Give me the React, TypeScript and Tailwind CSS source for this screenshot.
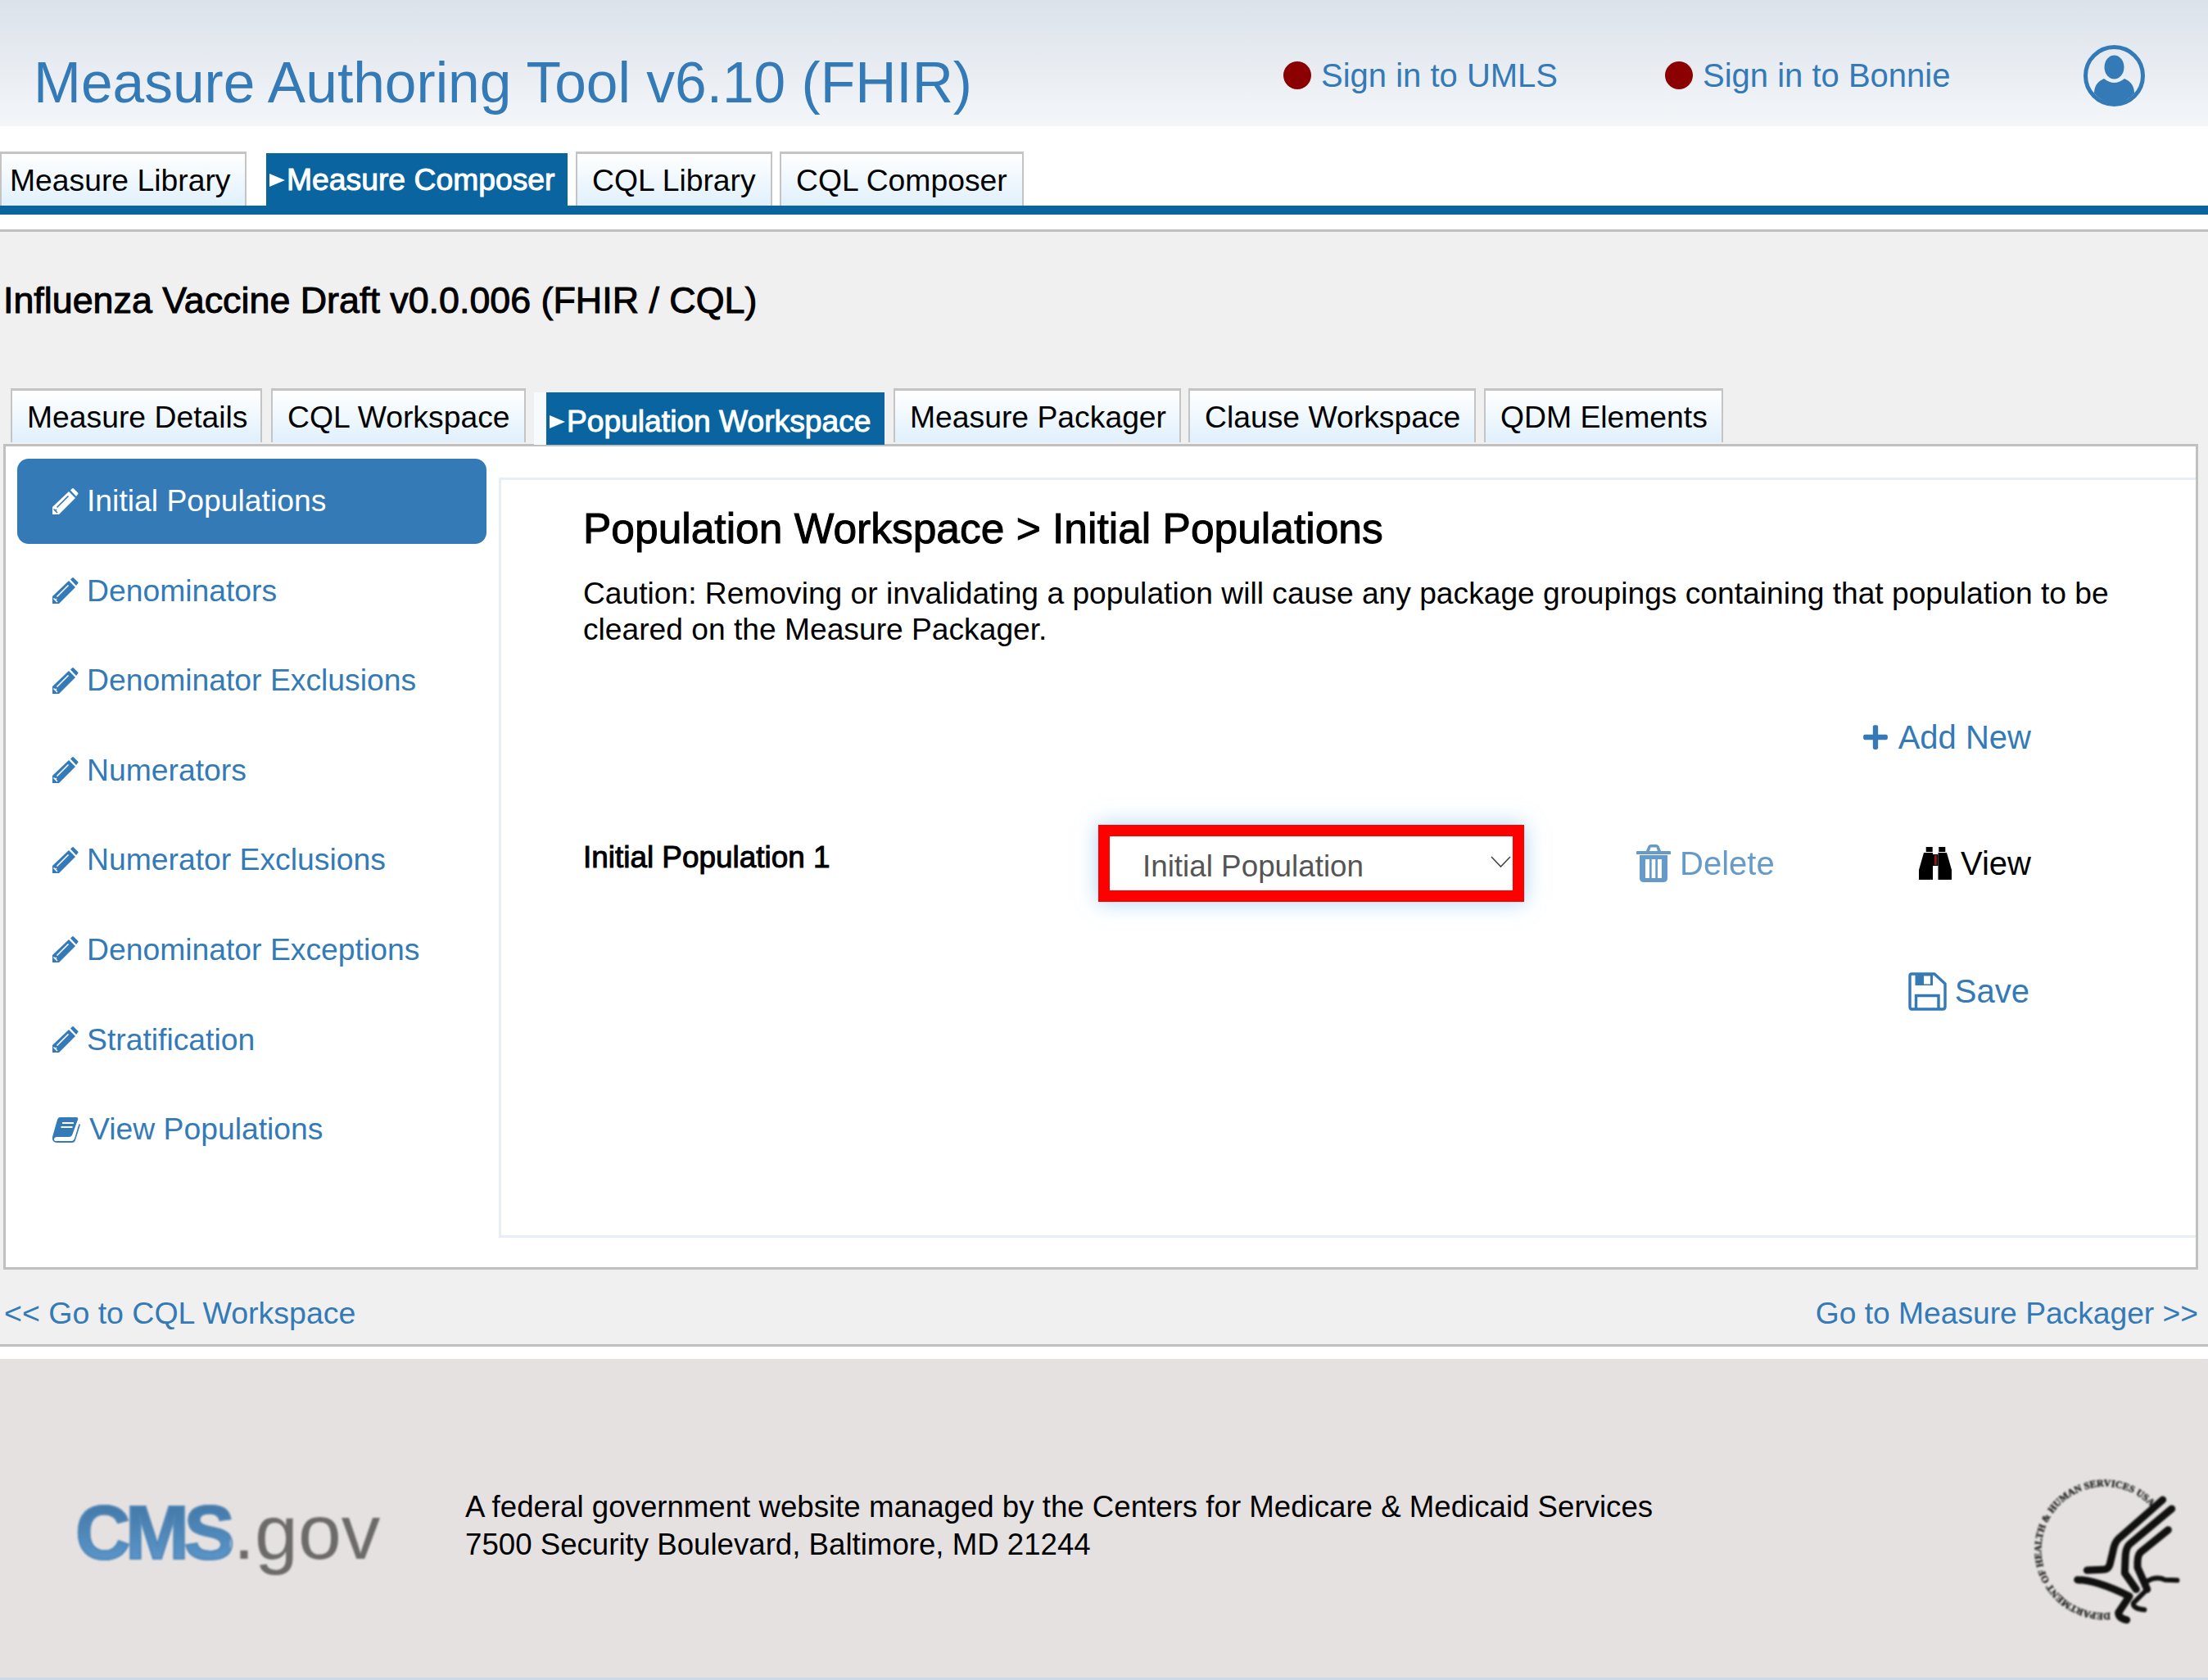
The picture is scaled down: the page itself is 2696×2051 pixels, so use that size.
import React from 'react';
import { FaPlus } from 'react-icons/fa';

function Pencil({ className }: { className: string }) {
  return (
    <svg viewBox="0 0 33 33" className={className}>
      <path fill="currentColor" d="M1 23 L21 4 L29 12 L9 32 L1 32 Z" />
      <path fill="currentColor" d="M23 2.5 L25 .5 Q26 -.5 27 .5 L32 5.5 Q33 6.5 32 7.5 L30 10 Z" />
      <path stroke="var(--hl)" strokeWidth="1.6" fill="none" d="M6.5 23.5 L20.5 9.5 M2.5 25.5 L7 30 M4 28 L6 26" />
    </svg>
  );
}

function Arrow() {
  return (
    <svg viewBox="0 0 19 16" className="w-[19px] h-[16px] shrink-0 mr-[2px]">
      <path fill="#fff" d="M0 0 L19 8 L0 16 Z" />
    </svg>
  );
}

function UserIcon() {
  return (
    <svg viewBox="0 0 75 75" className="w-[75px] h-[75px]">
      <circle cx="37.5" cy="37.5" r="35" fill="none" stroke="#337ab7" strokeWidth="5" />
      <ellipse cx="37.5" cy="27" rx="12" ry="14.5" fill="#337ab7" />
      <path fill="#337ab7" d="M13 59 Q13 46 25 41 Q37.5 51 50 41 Q62 46 62 59 Q51 71 37.5 71 Q24 71 13 59 Z" />
    </svg>
  );
}

function TrashIcon() {
  return (
    <svg viewBox="0 0 42 46" className="w-[42px] h-[46px] mr-[11px]">
      <path fill="currentColor" d="M12 8 L14 3 Q15 0 18 0 H24 Q27 0 28 3 L30 8 H41 Q42 8 42 9 V12 H0 V9 Q0 8 1 8 Z M16 8 H26 L24.5 3.5 H17.5 Z" />
      <path fill="currentColor" d="M4 13 H38 V41 Q38 46 33 46 H9 Q4 46 4 41 Z" />
      <path fill="#fff" d="M11 18 H16 V41 H11 Z M18.7 18 H23.3 V41 H18.7 Z M26 18 H31 V41 H26 Z" />
    </svg>
  );
}

function BinocularsIcon() {
  return (
    <svg viewBox="0 0 40 40" className="w-[40px] h-[40px] mr-[11px]">
      <path fill="#000" d="M8.7 0 H16.7 V6 H8.7 Z M24.3 0 H32.3 V6 H24.3 Z" />
      <path fill="#000" d="M6 7 H17 V40 H14.3 V38 L14 40 H0 V28 Z" />
      <path fill="#000" d="M23.5 7 H34 L40 28 V40 H26 V40 H23.5 Z" />
      <path fill="#000" d="M17 9 H23.5 V23 H17 Z" />
      <path fill="#8a1c1c" d="M18.8 10 H21.8 V22 H18.8 Z" />
    </svg>
  );
}

function SaveIcon() {
  return (
    <svg viewBox="0 0 47 47" className="w-[47px] h-[47px] mr-[10px]">
      <path fill="none" stroke="currentColor" strokeWidth="3.4" strokeLinejoin="round" d="M4 2 H32 L45 14 V42 Q45 45 42 45 H4 Q2 45 2 42 V4 Q2 2 4 2 Z" />
      <path fill="currentColor" fillRule="evenodd" d="M8.5 3 H30 V16 H8.5 Z M19 4.5 H27 V14.5 H19 Z" />
      <path fill="none" stroke="currentColor" strokeWidth="3.4" d="M9.5 45 V28.5 H37 V45" />
    </svg>
  );
}

function BookIcon() {
  return (
    <svg viewBox="0 0 35 33" className="w-[35px] h-[33px] mr-[11px]">
      <path fill="currentColor" d="M10 1 H30 Q33 1 32 4 L25 23 Q24 25 21 25 H7 Q3 25 3 28 Q3 30 6 30 H25 Q27 30 28 27 L33.5 9 L35 10 L29 29 Q28 32 25 32 H7 Q0 32 1 25 L7 4 Q8 1 10 1 Z" />
      <path fill="none" stroke="#fff" strokeWidth="2" d="M13 8 H27 M11.5 13 H25.5" />
    </svg>
  );
}

function HhsSeal() {
  return (
    <svg viewBox="0 0 888 903" className="w-[296px] h-[301px] blur-[0.8px]">
      <defs>
        <path id="seal-ring" d="M530 666 A232 232 0 1 1 680 278" fill="none" />
      </defs>
      <text fontFamily="'Liberation Serif', serif" fontWeight="700" fontSize="36" fill="#1a1a1a" stroke="#1a1a1a" strokeWidth="1.2">
        <textPath href="#seal-ring" textLength="940" lengthAdjust="spacing">DEPARTMENT OF HEALTH &amp; HUMAN SERVICES USA</textPath>
      </text>
      <g fill="none" stroke="#111" strokeWidth="27" strokeLinecap="round" strokeLinejoin="round">
        <path d="M722 252 L560 395 Q545 410 540 440 L528 490 Q522 508 500 508 L445 510" />
        <path d="M755 285 L600 415 Q585 430 585 470 L583 520 L625 580" />
        <path d="M742 362 L640 445 Q628 458 630 500 L650 545 L665 580" />
        <path d="M665 550 Q700 530 730 545 L775 547" strokeWidth="18" />
        <path d="M410 545 Q480 545 600 605 L560 665 Q560 685 590 692" />
        <path d="M660 585 L615 630 Q610 650 655 655" strokeWidth="18" />
      </g>
    </svg>
  );
}

const topTabs = [
  { label: 'Measure Library', cls: 'w-[301px] pl-[10px]' },
  { label: 'Measure Composer', cls: 'w-[368px] ml-[24px]', active: true },
  { label: 'CQL Library', cls: 'w-[240px] ml-[10px] pl-[18px]' },
  { label: 'CQL Composer', cls: 'w-[298px] ml-[9px] pl-[18px]' },
];

const subTabs = [
  { label: 'Measure Details', cls: 'w-[307px] ml-[13px] pl-[18px]' },
  { label: 'CQL Workspace', cls: 'w-[311px] ml-[11px] pl-[18px]' },
  { label: 'Population Workspace', cls: 'w-[413px] ml-[25px]', active: true },
  { label: 'Measure Packager', cls: 'w-[351px] ml-[11px] pl-[18px]' },
  { label: 'Clause Workspace', cls: 'w-[351px] ml-[9px] pl-[18px]' },
  { label: 'QDM Elements', cls: 'w-[292px] ml-[10px] pl-[18px]' },
];

const sideItems = ['Denominators', 'Denominator Exclusions', 'Numerators', 'Numerator Exclusions', 'Denominator Exceptions', 'Stratification'];

const inactiveTab = 'h-full flex items-center pt-[2px] border-t-[3px] border-x-2 border-[#c4c4c4] bg-gradient-to-b from-white to-[#e0f0fc] text-black';
const fauxBold = '[-webkit-text-stroke:1px_currentColor]';

export default function App() {
  return (
    <div className="w-full h-[2051px] flex flex-col bg-white font-['Liberation_Sans',Arial,sans-serif] overflow-hidden">
      {/* header */}
      <header className="h-[154px] shrink-0 flex bg-gradient-to-b from-[#dbe2ea] to-[#f4f6f9] text-[#337ab7]">
        <h1 className="text-[69.5px] leading-[80px] font-normal ml-[41px] mt-[61px] w-[1526px] shrink-0 whitespace-nowrap">Measure Authoring Tool v6.10 (FHIR)</h1>
        <div className="flex items-center h-[44px] mt-[70px]">
          <span className="w-[34px] h-[34px] rounded-full bg-[#8b0000] mr-[12px]" />
          <span className="text-[40px] leading-[44px] w-[420px]">Sign in to UMLS</span>
          <span className="w-[34px] h-[34px] rounded-full bg-[#8b0000] mr-[12px]" />
          <span className="text-[40px] leading-[44px] w-[466px]">Sign in to Bonnie</span>
        </div>
        <div className="mt-[55px] -ml-[1px]"><UserIcon /></div>
      </header>

      {/* top tabs */}
      <nav className="h-[97px] shrink-0 pt-[31px] flex items-end">
        <div className="flex h-[66px] items-end">
          {topTabs.map((t) =>
            t.active ? (
              <div key={t.label} className={`${t.cls} h-[64px] flex items-center pl-[4px] pt-[2px] bg-[#0964a0] text-white text-[37.3px] ${fauxBold}`}>
                <Arrow />
                {t.label}
              </div>
            ) : (
              <div key={t.label} className={`${inactiveTab} ${t.cls} text-[37.3px]`}>{t.label}</div>
            ),
          )}
        </div>
      </nav>
      <div className="h-[11px] shrink-0 bg-[#0964a0]" />
      <div className="h-[18px] shrink-0 bg-white" />

      {/* main */}
      <main className="h-[1364px] shrink-0 flex flex-col bg-[#f0f0f0] border-y-[3px] border-[#c0c0c0]">
        <h2 className={`text-[44.8px] leading-[50px] font-normal text-black ml-[4px] mt-[58px] mb-[83px] ${fauxBold}`}>
          Influenza Vaccine Draft v0.0.006 (FHIR / CQL)
        </h2>

        <div className="flex h-[66px] items-end">
          {subTabs.map((t) =>
            t.active ? (
              <div key={t.label} className={`${t.cls} h-[64px] -mb-[3px] flex items-center pl-[4px] pt-[8px] bg-[#0964a0] text-white text-[37.2px] relative z-10 shadow-[-15px_0_0_#f8fbfd] ${fauxBold}`}>
                <Arrow />
                {t.label}
              </div>
            ) : (
              <div key={t.label} className={`${inactiveTab} ${t.cls} text-[37.3px]`}>{t.label}</div>
            ),
          )}
        </div>

        {/* panel */}
        <section className="ml-[4px] mt-[2px] w-[2680px] h-[1008px] shrink-0 flex bg-white border-[3px] border-[#c0c0c0]">
          <aside className="w-[602px] shrink-0 pt-[15px] pl-[14px] flex flex-col gap-[5.6px] text-[37.3px]">
            <div className="w-[573px] h-[104px] rounded-[14px] bg-[#337ab7] text-white flex items-center pl-[42px] [--hl:#337ab7]">
              <Pencil className="w-[33px] h-[33px] mr-[10px]" />
              Initial Populations
            </div>
            {sideItems.map((s) => (
              <div key={s} className="w-[573px] h-[104px] text-[#337ab7] flex items-center pl-[42px] [--hl:#fff]">
                <Pencil className="w-[33px] h-[33px] mr-[10px]" />
                {s}
              </div>
            ))}
            <div className="w-[573px] h-[104px] text-[#337ab7] flex items-center pl-[42px]">
              <BookIcon />
              View Populations
            </div>
          </aside>

          <div className="mt-[38px] h-[928px] flex-1 border-[3px] border-r-0 border-[#e8eef6] pl-[100px] pr-[201px] pt-[34px] text-black">
            <h3 className={`text-[51.5px] leading-[50px] font-normal whitespace-nowrap ${fauxBold}`}>Population Workspace &gt; Initial Populations</h3>
            <p className="text-[37.2px] leading-[44px] mt-[32px] -mr-[110px]">
              Caution: Removing or invalidating a population will cause any package groupings containing that population to be<br />
              cleared on the Measure Packager.
            </p>

            <div className="flex justify-end items-center mt-[88px] h-[44px] text-[40px] text-[#337ab7]">
              <FaPlus className="w-[34px] h-[34px] mr-[11px]" />
              Add New
            </div>

            <div className="flex items-center mt-[85px] h-[94px]">
              <div className={`w-[629px] shrink-0 text-[36.9px] leading-[44px] -mt-[14px] ${fauxBold}`}>Initial Population 1</div>
              <div className="w-[520px] h-[94px] shrink-0 border-[14px] border-[#ff0000] bg-white shadow-[0_0_24px_rgba(102,175,233,0.55)] flex justify-between pl-[40px] pr-[2px]">
                <span className="text-[36.8px] leading-[66px] pt-[4px] text-[#555]">Initial Population</span>
                <svg viewBox="0 0 25 14" className="w-[25px] h-[14px] mt-[24px]">
                  <path d="M1 1 L12.5 13 L24 1" fill="none" stroke="#444" strokeWidth="1.6" />
                </svg>
              </div>
              <div className="ml-[137px] flex items-center text-[40px] text-[#337ab7] opacity-75">
                <TrashIcon />
                Delete
              </div>
              <div className="ml-auto flex items-center text-[40px] text-black">
                <BinocularsIcon />
                View
              </div>
            </div>

            <div className="flex justify-end items-center mt-[87px] h-[44px] pr-[2px] text-[40px] text-[#337ab7]">
              <SaveIcon />
              Save
            </div>
          </div>
        </section>

        {/* prev / next */}
        <div className="flex justify-between mt-[31px] px-[5px] mr-[7px] text-[37.5px] leading-[44px] text-[#337ab7]">
          <span>&lt;&lt; Go to CQL Workspace</span>
          <span className="text-[37.2px]">Go to Measure Packager &gt;&gt;</span>
        </div>
      </main>

      <div className="h-[15px] shrink-0 bg-white" />

      {/* footer */}
      <footer className="flex-1 flex bg-[#e5e1e1] border-b-[5px] border-[#ccd9e6]">
        <div className="w-[568px] shrink-0 pl-[92px] pt-[161px] flex items-baseline h-fit blur-[1px]">
          <span className="text-[93px] leading-[100px] font-bold tracking-[-6px] bg-gradient-to-b from-[#3f72a0] to-[#609dd2] bg-clip-text text-transparent [-webkit-text-stroke:2px_#4f86b6]">CMS</span>
          <span className="text-[95px] leading-[100px] text-[#6d6a6a] ml-[4px]">.gov</span>
        </div>
        <div className="pt-[158px] text-[36.65px] leading-[46px] text-black w-[1832px] shrink-0">
          A federal government website managed by the Centers for Medicare &amp; Medicaid Services<br />
          7500 Security Boulevard, Baltimore, MD 21244
        </div>
        <div className="pt-[88px]"><HhsSeal /></div>
      </footer>
    </div>
  );
}
